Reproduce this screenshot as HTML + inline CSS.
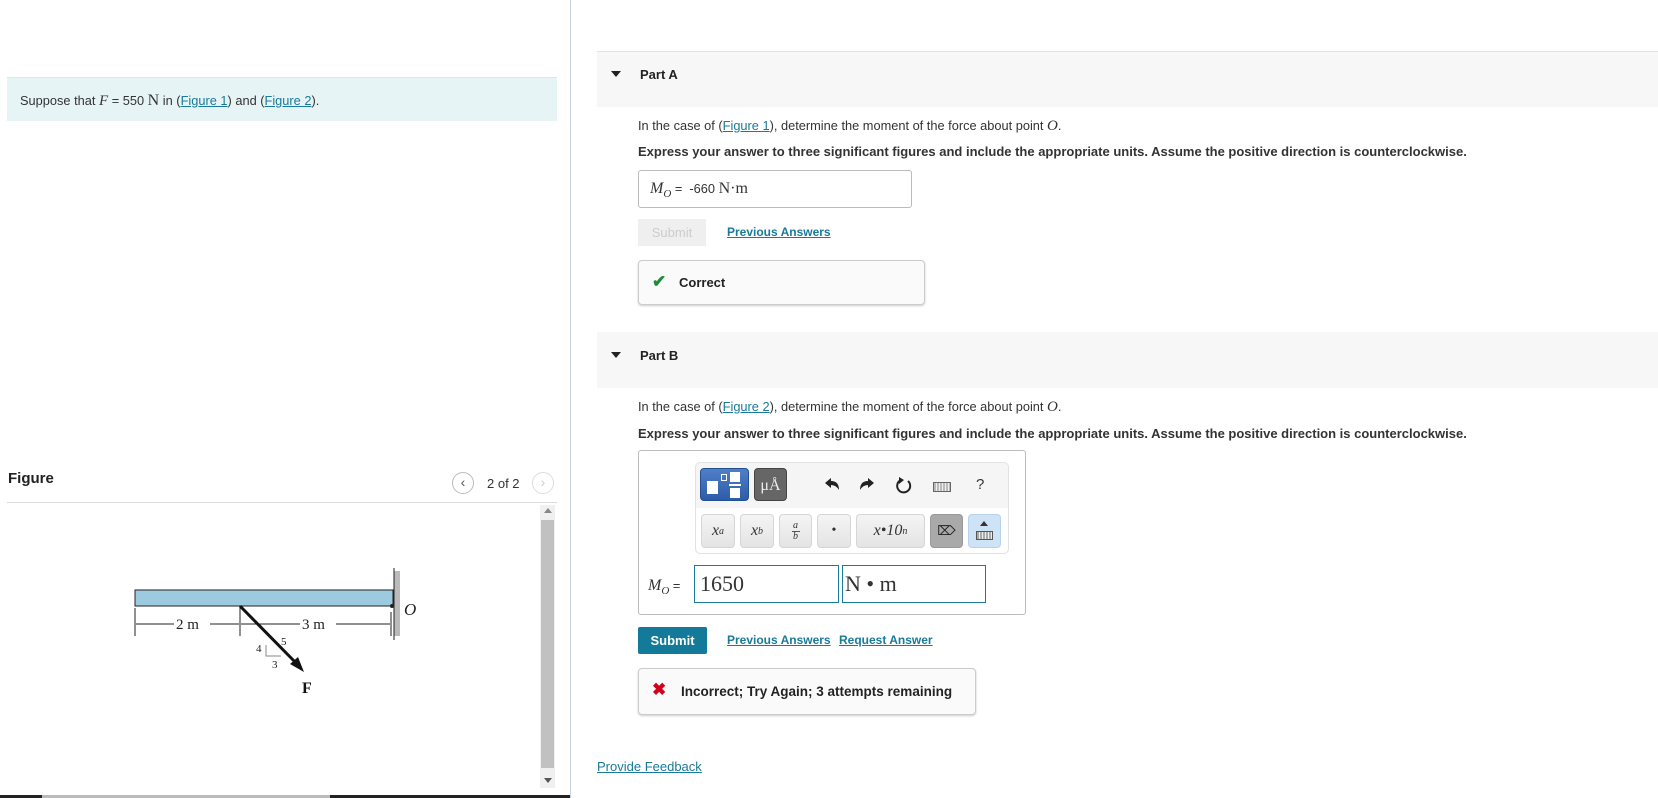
<!DOCTYPE html>
<html><head><meta charset="utf-8"><style>
*{box-sizing:border-box;margin:0;padding:0}
body{width:1658px;height:798px;position:relative;overflow:hidden;background:#fff;font-family:"Liberation Sans",Arial,sans-serif;color:#333;font-size:12.8px}
.a{position:absolute}
a,.lnk{color:#1a7a9a;text-decoration:underline}
.ser{font-family:"Liberation Serif",serif}
.b{font-weight:bold}
.btn{position:absolute;border:1px solid #d6d6d6;border-radius:4px;background:linear-gradient(#f4f4f4,#e4e4e4);display:flex;align-items:center;justify-content:center;font-family:"Liberation Serif",serif;font-style:italic;font-size:16px;color:#333}
</style></head><body>
<div class="a" style="left:570px;top:0;width:1px;height:798px;background:#c9d3dc"></div>
<div class="a" style="left:7px;top:77px;width:550px;height:44px;background:#e6f4f6;border-top:1px solid #d8e8ec"></div>
<div class="a" style="left:20px;top:92px;font-size:12.8px">Suppose that <span class="ser" style="font-style:italic;font-size:15px">F</span> = 550 <span class="ser" style="font-size:16px">N</span> in (<span class="lnk">Figure 1</span>) and (<span class="lnk">Figure 2</span>).</div>
<div class="a b" style="left:8px;top:470px;font-size:15px;color:#222">Figure</div>
<div class="a" style="left:7px;top:502px;width:550px;height:1px;background:#ddd"></div>
<div class="a" style="left:452px;top:472px;width:22px;height:22px;border:1px solid #bbb;border-radius:50%;color:#555;font-size:14px;text-align:center;line-height:19px">&#8249;</div>
<div class="a" style="left:487px;top:476px;font-size:13px">2 of 2</div>
<div class="a" style="left:532px;top:472px;width:22px;height:22px;border:1px solid #ddd;border-radius:50%;color:#ccc;font-size:14px;text-align:center;line-height:19px">&#8250;</div>
<div class="a" style="left:540px;top:505px;width:15px;height:283px;background:#f0f0f0"></div>
<div class="a" style="left:541px;top:520px;width:13px;height:248px;background:#c1c1c1"></div>
<div class="a" style="left:544px;top:508px;width:0;height:0;border-left:4px solid transparent;border-right:4px solid transparent;border-bottom:5px solid #888"></div>
<div class="a" style="left:544px;top:778px;width:0;height:0;border-left:4px solid transparent;border-right:4px solid transparent;border-top:5px solid #555"></div>
<div class="a" style="left:0;top:795px;width:570px;height:3px;background:#222"></div>
<div class="a" style="left:42px;top:795px;width:288px;height:3px;background:#bbb"></div>
<svg class="a" style="left:120px;top:560px" width="320" height="140" viewBox="120 560 320 140">
<rect x="394" y="571" width="6" height="65" fill="#bbb"/>
<line x1="394" y1="568" x2="394" y2="640" stroke="#222" stroke-width="1"/>
<rect x="135" y="590" width="258" height="16" fill="#9ccbe0" stroke="#222" stroke-width="1"/>
<circle cx="392" cy="606" r="2" fill="#222"/>
<text x="404" y="615" font-family="Liberation Serif" font-style="italic" font-size="17" fill="#222">O</text>
<g stroke="#222" stroke-width="1">
<line x1="135" y1="608" x2="135" y2="636"/><line x1="240" y1="608" x2="240" y2="636"/><line x1="391" y1="612" x2="391" y2="636"/>
<line x1="136" y1="624" x2="174" y2="624"/><line x1="210" y1="624" x2="239" y2="624"/>
<line x1="241" y1="624" x2="300" y2="624"/><line x1="336" y1="624" x2="390" y2="624"/>
</g>
<text x="176" y="629" font-family="Liberation Serif" font-size="15" fill="#222">2 m</text>
<text x="302" y="629" font-family="Liberation Serif" font-size="15" fill="#222">3 m</text>
<line x1="240" y1="606" x2="298" y2="665" stroke="#111" stroke-width="3"/>
<polygon points="304,672 290,664 298,657" fill="#111"/>
<polyline points="266,645 266,656 281,656" fill="none" stroke="#888" stroke-width="1"/>
<text x="256" y="652" font-family="Liberation Serif" font-size="11" fill="#222">4</text>
<text x="281" y="645" font-family="Liberation Serif" font-size="11" fill="#222">5</text>
<text x="272" y="668" font-family="Liberation Serif" font-size="11" fill="#222">3</text>
<text x="302" y="693" font-family="Liberation Serif" font-weight="bold" font-size="16" fill="#111">F</text>
</svg>
<div class="a" style="left:597px;top:51px;width:1061px;height:56px;background:#f7f7f7;border-top:1px solid #e2e2e2"></div>
<div class="a" style="left:611px;top:71px;border-left:5px solid transparent;border-right:5px solid transparent;border-top:6px solid #222"></div>
<div class="a b" style="left:640px;top:67px;font-size:13px;color:#222">Part A</div>
<div class="a" style="left:638px;top:118px">In the case of (<span class="lnk">Figure 1</span>), determine the moment of the force about point <span class="ser" style="font-style:italic;font-size:15px">O</span>.</div>
<div class="a b" style="left:638px;top:144px;color:#333;font-size:13px">Express your answer to three significant figures and include the appropriate units. Assume the positive direction is counterclockwise.</div>
<div class="a" style="left:638px;top:170px;width:274px;height:38px;border:1px solid #bbb;border-radius:3px"></div>
<div class="a" style="left:650px;top:180px"><span class="ser" style="font-style:italic;font-size:16px">M<sub style="font-size:11px">O</sub></span> = &nbsp;-660 <span class="ser" style="font-size:16px">N·m</span></div>
<div class="a" style="left:638px;top:219px;width:68px;height:27px;background:#efefef;color:#ccc;font-size:13px;text-align:center;line-height:27px">Submit</div>
<div class="a lnk b" style="left:727px;top:225px;font-size:12px">Previous Answers</div>
<div class="a" style="left:638px;top:260px;width:287px;height:45px;border:1px solid #ccc;border-radius:4px;background:#fafafa;box-shadow:0 1px 2px #ccc"></div>
<div class="a" style="left:652px;top:272px;color:#1e8c3a;font-size:17px;font-weight:bold">&#10004;</div>
<div class="a b" style="left:679px;top:275px;font-size:13px;color:#222">Correct</div>
<div class="a" style="left:597px;top:332px;width:1061px;height:56px;background:#f7f7f7"></div>
<div class="a" style="left:611px;top:352px;border-left:5px solid transparent;border-right:5px solid transparent;border-top:6px solid #222"></div>
<div class="a b" style="left:640px;top:348px;font-size:13px;color:#222">Part B</div>
<div class="a" style="left:638px;top:399px">In the case of (<span class="lnk">Figure 2</span>), determine the moment of the force about point <span class="ser" style="font-style:italic;font-size:15px">O</span>.</div>
<div class="a b" style="left:638px;top:426px;font-size:13px">Express your answer to three significant figures and include the appropriate units. Assume the positive direction is counterclockwise.</div>
<div class="a" style="left:638px;top:450px;width:388px;height:165px;border:1px solid #bbb;border-radius:3px"></div>
<div class="a" style="left:695px;top:462px;width:314px;height:92px;border:1px solid #e2e2e2;border-radius:5px;background:#f5f5f5"></div>
<div class="a" style="left:696px;top:508px;width:312px;height:45px;background:#fff;border-radius:0 0 5px 5px"></div>
<div class="a" style="left:700px;top:468px;width:49px;height:33px;border-radius:4px;background:linear-gradient(#4f7fc9,#2d5da8);border:1px solid #25508f"></div>
<div class="a" style="left:707px;top:481px;width:11px;height:13px;background:#fff"></div>
<div class="a" style="left:721px;top:474px;width:6px;height:7px;border:1px solid #fff"></div>
<div class="a" style="left:730px;top:472px;width:10px;height:10px;background:#fff"></div>
<div class="a" style="left:729px;top:484px;width:12px;height:2px;background:#fff"></div>
<div class="a" style="left:730px;top:488px;width:10px;height:10px;background:#fff"></div>
<div class="a ser" style="left:754px;top:468px;width:33px;height:33px;border-radius:4px;background:#666;border:1px solid #444;color:#eee;font-size:16px;text-align:center;line-height:34px">μÅ</div>
<svg class="a" style="left:822px;top:476px" width="95" height="20">
<path d="M3 7 L9 2 L9 5 Q17 5 17 14 Q14 9 9 9 L9 12 Z" fill="#222"/>
<path d="M52 7 L46 2 L46 5 Q38 5 38 14 Q41 9 46 9 L46 12 Z" fill="#222"/>
<path d="M86 5 A6.5 6.5 0 1 1 78 4.5" fill="none" stroke="#222" stroke-width="2"/>
<path d="M77 1 L82 4 L77 8 Z" fill="#222"/>
</svg>
<div class="a" style="left:933px;top:482px;width:18px;height:10px;border:1px solid #666;background:repeating-linear-gradient(90deg,#bbb 0 2px,#eee 2px 3px)"></div>
<div class="a" style="left:976px;top:476px;font-size:15px;color:#333">?</div>
<div class="btn" style="left:701px;top:514px;width:34px;height:34px">x<sup style="font-size:10px">a</sup></div>
<div class="btn" style="left:740px;top:514px;width:34px;height:34px">x<sub style="font-size:10px">b</sub></div>
<div class="btn" style="left:779px;top:514px;width:33px;height:34px;flex-direction:column;font-size:10px;line-height:10px"><span>a</span><span style="border-top:1px solid #555;width:8px;text-align:center">b</span></div>
<div class="btn" style="left:817px;top:514px;width:34px;height:34px;font-style:normal;font-size:14px">•</div>
<div class="btn" style="left:856px;top:514px;width:69px;height:34px;font-size:16px">x•10<sup style="font-size:10px">n</sup></div>
<div class="btn" style="left:930px;top:514px;width:33px;height:34px;background:#a9a9a9;border-color:#999;font-style:normal;font-size:13px;color:#222">&#8998;</div>
<div class="btn" style="left:968px;top:514px;width:33px;height:34px;background:#cfe3f7;border-color:#b7d2ee"></div>
<div class="a" style="left:980px;top:521px;border-left:4px solid transparent;border-right:4px solid transparent;border-bottom:5px solid #333"></div>
<div class="a" style="left:976px;top:531px;width:17px;height:9px;border:1px solid #555;background:repeating-linear-gradient(90deg,#aaa 0 2px,#eee 2px 3px)"></div>
<div class="a" style="left:648px;top:577px"><span class="ser" style="font-style:italic;font-size:16px">M<sub style="font-size:11px">O</sub></span> =</div>
<div class="a ser" style="left:694px;top:565px;width:145px;height:38px;border:1px solid #1a7a9a;font-size:22px;padding-left:5px;line-height:36px;color:#333">1650</div>
<div class="a ser" style="left:842px;top:565px;width:144px;height:38px;border:1px solid #1a7a9a;font-size:22px;padding-left:2px;line-height:36px;color:#333">N • m</div>
<div class="a b" style="left:638px;top:627px;width:69px;height:27px;background:#137a9a;color:#fff;font-size:13px;text-align:center;line-height:27px;border-radius:2px">Submit</div>
<div class="a lnk b" style="left:727px;top:633px;font-size:12px">Previous Answers</div>
<div class="a lnk b" style="left:839px;top:633px;font-size:12px">Request Answer</div>
<div class="a" style="left:638px;top:668px;width:338px;height:47px;border:1px solid #ccc;border-radius:4px;background:#fafafa;box-shadow:0 1px 2px #ccc"></div>
<div class="a" style="left:652px;top:680px;color:#d0021b;font-size:17px;font-weight:bold">&#10006;</div>
<div class="a b" style="left:681px;top:684px;font-size:13.5px;color:#222">Incorrect; Try Again; 3 attempts remaining</div>
<div class="a lnk" style="left:597px;top:759px;font-size:13px">Provide Feedback</div>
</body></html>
